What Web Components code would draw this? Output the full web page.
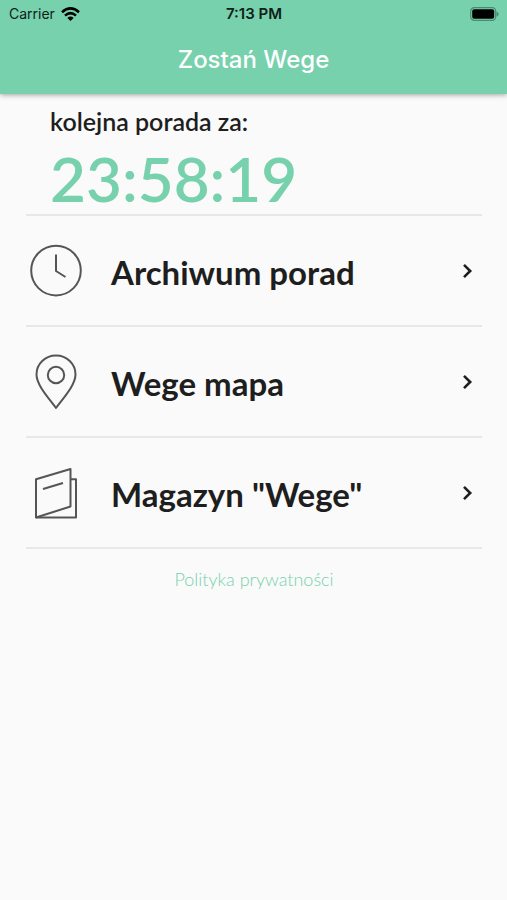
<!DOCTYPE html>
<html lang="pl">
<head>
<meta charset="utf-8">
<meta name="viewport" content="width=device-width, initial-scale=1">
<title>Zostań Wege</title>
<style>
  body {
    margin: 0;
    background: #fafafa;
    color: #1e1e1e;
    font-family: Lato, "Open Sans", sans-serif;
  }
</style>
</head>
<body>
<wege-app></wege-app>

<script>
class StatusBar extends HTMLElement {
  constructor() {
    super();

    const shadow = this.attachShadow({ mode: 'open' });

    shadow.innerHTML = `
    <style>
      :host {
        display: grid;
        grid-template-columns: 1fr auto 1fr;
        align-items: center;
        height: 27px;
        padding: 0 8px 0 9px;
        color: #10201a;
        font: 400 14px/27px Inter, sans-serif;
      }
      .carrier {
        display: flex;
        align-items: center;
        gap: 6px;
      }
      .time {
        font-weight: 600;
        font-size: 15px;
      }
      .battery { justify-self: end; }
      svg { display: block; }
    </style>
    <div class="carrier">
      <span>Carrier</span>
      <svg width="19" height="14" viewBox="0 0 19 14" fill="none" stroke="#000" stroke-width="2.5">
        <path d="M1 5.2 Q9.5 -2.4 18 5.2"/>
        <path d="M4 8.6 Q9.5 3.6 15 8.6"/>
        <path d="M6.4 10.9 Q9.5 8.2 12.6 10.9 L9.5 14 Z" fill="#000" stroke="none"/>
      </svg>
    </div>
    <div class="time"><slot></slot></div>
    <svg class="battery" width="29" height="14" viewBox="0 0 29 14">
      <rect x="0.7" y="0.7" width="25" height="12.6" rx="3.6" fill="none" stroke="#4b8a70" stroke-width="1.2"/>
      <rect x="2.2" y="2.2" width="22" height="9.6" rx="2" fill="#000"/>
      <path d="M26.6 4.2 Q30.8 7 26.6 9.8 Z" fill="#4b8a70"/>
    </svg>
    `;
  }
}

class AppHeader extends HTMLElement {
  constructor() {
    super();

    const shadow = this.attachShadow({ mode: 'open' });

    shadow.innerHTML = `
    <style>
      :host {
        display: block;
        background: #77d1ad;
        box-shadow: 0 1px 5px rgba(0, 0, 0, 0.35);
      }
      h1 {
        margin: 0;
        padding-bottom: 1px;
        color: #fff;
        font: 500 24px/66px Inter, sans-serif;
        text-align: center;
      }
    </style>
    <status-bar>7:13 PM</status-bar>
    <h1><slot></slot></h1>
    `;
  }
}

class TipCountdown extends HTMLElement {
  constructor() {
    super();

    const shadow = this.attachShadow({ mode: 'open' });

    shadow.innerHTML = `
    <style>
      :host {
        display: block;
        padding: 11px 24px 0;
        border-bottom: 2px solid #e8e8e8;
      }
      p {
        margin: 0;
        font-weight: 600;
        font-size: 25px;
        line-height: 32px;
      }
      time {
        display: block;
        padding-top: 5px;
        color: #77d1ad;
        font-weight: 600;
        font-size: 62px;
        line-height: 72px;
      }
    </style>
    <p><slot></slot></p>
    <time>${this.getAttribute('time')}</time>
    `;
  }
}

const icons = {
  clock: `
    <circle cx="30" cy="29.6" r="24.8"/>
    <path d="M30 13.5 V30 L39.5 36"/>`,
  pin: `
    <path d="M30 56 C24 47.5 10.5 33.5 10.5 22.5 A19.5 19 0 0 1 49.5 22.5 C49.5 33.5 36 47.5 30 56 Z"/>
    <circle cx="30" cy="23" r="8.2"/>`,
  magazine: `
    <path d="M10 16.2 L44.5 6 V43.5 L10 54.5 Z"/>
    <path d="M44.5 16.2 H50 V54.5 H10"/>
    <path d="M17 26 L37 20"/>`
};

class MenuItem extends HTMLElement {
  constructor() {
    super();

    const shadow = this.attachShadow({ mode: 'open' });

    shadow.innerHTML = `
    <style>
      :host {
        display: block;
        border-bottom: 2px solid #e8e8e8;
      }
      a {
        display: flex;
        align-items: center;
        gap: 25px;
        height: 109px;
        color: inherit;
        text-decoration: none;
      }
      .label {
        flex: 1;
        font-weight: 700;
        font-size: 33px;
        line-height: 40px;
        padding-top: 2px;
      }
      svg { flex: none; }
      .icon {
        fill: none;
        stroke: #555;
        stroke-width: 2;
        stroke-linejoin: round;
      }
      .chevron {
        margin-right: 8px;
        fill: none;
        stroke: #1e1e1e;
        stroke-width: 2.6;
      }
    </style>
    <a href="#${this.getAttribute('icon')}">
      <svg class="icon" width="60" height="60" viewBox="0 0 60 60">${icons[this.getAttribute('icon')]}</svg>
      <span class="label"><slot></slot></span>
      <svg class="chevron" width="12" height="16" viewBox="0 0 12 16"><path d="M2 1.8 L8.2 8 L2 14.2"/></svg>
    </a>
    `;
  }
}

class WegeApp extends HTMLElement {
  constructor() {
    super();

    const shadow = this.attachShadow({ mode: 'open' });

    shadow.innerHTML = `
    <style>
      :host { display: block; }
      main { padding: 0 25px 0 26px; }
      footer {
        padding-top: 18px;
        text-align: center;
      }
      footer a {
        color: #77d1ad;
        font-weight: 300;
        font-size: 18px;
        line-height: 24px;
        text-decoration: none;
      }
    </style>
    <app-header>Zostań Wege</app-header>
    <main>
      <tip-countdown time="23:58:19">kolejna porada za:</tip-countdown>
      <nav>
        <menu-item icon="clock">Archiwum porad</menu-item>
        <menu-item icon="pin">Wege mapa</menu-item>
        <menu-item icon="magazine">Magazyn "Wege"</menu-item>
      </nav>
      <footer><a href="#privacy">Polityka prywatności</a></footer>
    </main>
    `;
  }
}

customElements.define('status-bar', StatusBar);
customElements.define('app-header', AppHeader);
customElements.define('tip-countdown', TipCountdown);
customElements.define('menu-item', MenuItem);
customElements.define('wege-app', WegeApp);
</script>
</body>
</html>
